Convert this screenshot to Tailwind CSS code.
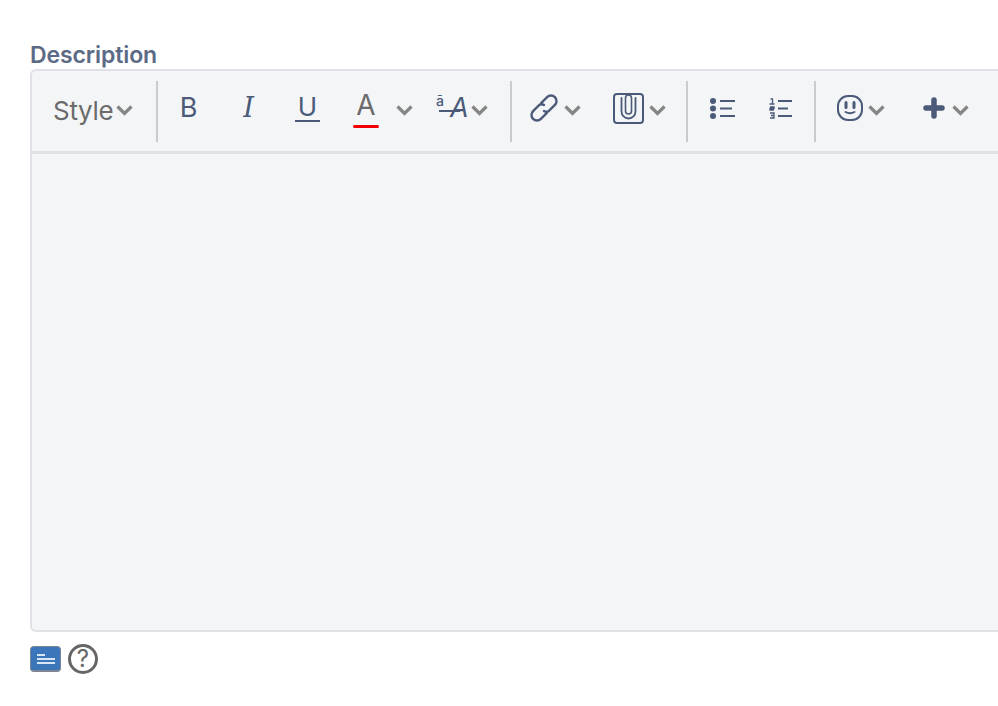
<!doctype html>
<html lang="en">
<head>
<meta charset="utf-8">
<title>Description</title>
<script src="https://cdn.jsdelivr.net/npm/@tailwindcss/browser@4"></script>
</head>
<body class="bg-white font-['Inter',sans-serif] overflow-hidden">
<div class="w-[998px] h-[706px] overflow-hidden pl-[30px] pt-[41px]">
  <div class="h-[28px] text-[23px] leading-[28px] font-semibold text-[#5b6a85] tracking-[-0.1px]">Description</div>
  <div class="w-[1000px] h-[563px] flex flex-col rounded-l-[6px] border-2 border-[#dfe1e6] border-r-0 bg-[#f4f5f7]">
    <div class="h-[83px] shrink-0 flex items-center border-b-[3px] border-[#dfe1e6] pl-[21px] pb-[6px] text-[#4a5a78]">
      <div class="w-[62px] pt-[5px] text-[26px] leading-none text-[#6b6b6b] tracking-[-0.3px]">Style</div>
      <div class="w-[19px] flex justify-center pt-1"><svg class="w-[17px] h-[11px]" viewBox="0 0 17 11" fill="none" stroke="#858585" stroke-width="3.2"><path d="M1.5 1.5 8.5 8.5 15.5 1.5"/></svg></div>
      <div class="w-[22px]"></div>
      <div class="w-[2px] h-[61px] mt-[7px] bg-[#c8cbd0]"></div>
      <div class="w-[61px] pb-[2px] text-center text-[27px] leading-none">B</div>
      <div class="w-[59px] pb-[2px] text-center text-[27px] leading-none italic font-['DejaVu_Serif',serif] font-light">I</div>
      <div class="w-[59px] flex justify-center"><div class="w-[25px] border-b-2 border-[#4a5a78] text-center text-[26px] leading-[24px] pb-[1px]">U</div></div>
      <div class="w-[58px] flex justify-center"><div class="relative w-[26px] h-[32px] text-center text-[28px] leading-[26px] text-[#6b6b6b]">A<div class="absolute left-0 top-[33px] w-[26px] h-[3px] rounded-full bg-[#f00000]"></div></div></div>
      <div class="w-[19px] flex justify-center pt-1"><svg class="w-[17px] h-[11px]" viewBox="0 0 17 11" fill="none" stroke="#858585" stroke-width="3.2"><path d="M1.5 1.5 8.5 8.5 15.5 1.5"/></svg></div>
      <div class="w-[23px]"></div>
      <div class="relative w-[32px] h-[32px]">
        <span class="absolute left-[-1px] top-[2px] text-[14px] leading-none font-medium">ā</span>
        <span class="absolute left-[13px] top-[1px] text-[27px] leading-[30px] italic">A</span>
        <div class="absolute left-[2px] top-[18px] w-[21px] h-[2px] bg-[#4a5a78]"></div>
      </div>
      <div class="w-[20px] flex justify-center pt-1"><svg class="w-[17px] h-[11px]" viewBox="0 0 17 11" fill="none" stroke="#858585" stroke-width="3.2"><path d="M1.5 1.5 8.5 8.5 15.5 1.5"/></svg></div>
      <div class="w-[21px]"></div>
      <div class="w-[2px] h-[61px] mt-[7px] bg-[#c8cbd0]"></div>
      <div class="w-[17px]"></div>
      <svg class="w-[30px] h-[30px] shrink-0" viewBox="0 0 30 30" fill="none" stroke="#4a5a78" stroke-width="2.4" stroke-linecap="round"><path d="M12.100 10.100 18.100 4.100A5.500 5.500 0 0 1 25.900 11.900L19.900 17.900Q17.500 19.500 15 18"/><path d="M17.900 19.900 11.900 25.900A5.500 5.500 0 0 1 4.100 18.100L10.100 12.100Q12.500 10.500 15 12"/></svg>
      <div class="w-[5px]"></div>
      <div class="w-[17px] flex justify-center pt-1"><svg class="w-[17px] h-[11px] shrink-0" viewBox="0 0 17 11" fill="none" stroke="#858585" stroke-width="3.2"><path d="M1.5 1.5 8.5 8.5 15.5 1.5"/></svg></div>
      <div class="w-[32px]"></div>
      <svg class="w-[31px] h-[31px] shrink-0" viewBox="0 0 31 31" fill="none" stroke="#4a5a78" stroke-width="2"><rect x="1" y="1" width="29" height="29" rx="3"/><path d="M8.500 5v13.500a7 7 0 0 0 14 0V5" stroke-width="1.800" stroke-linecap="round"/><path d="M12.500 5v13a3 3 0 0 0 6 0V5a3 3 0 0 0-6 0" stroke-width="1.600" stroke-linecap="round"/></svg>
      <div class="w-[5px]"></div>
      <div class="w-[17px] flex justify-center pt-1"><svg class="w-[17px] h-[11px] shrink-0" viewBox="0 0 17 11" fill="none" stroke="#858585" stroke-width="3.2"><path d="M1.5 1.5 8.5 8.5 15.5 1.5"/></svg></div>
      <div class="w-[20px]"></div>
      <div class="w-[2px] h-[61px] mt-[7px] bg-[#c8cbd0]"></div>
      <div class="w-[22px]"></div>
      <svg class="w-[26px] h-[21px] shrink-0" viewBox="0 0 26 21" fill="#4a5a78"><circle cx="3" cy="3" r="3"/><circle cx="3" cy="10.500" r="3"/><circle cx="3" cy="18" r="3"/><rect x="10" y="2" width="15" height="2"/><rect x="10" y="9.500" width="12" height="2"/><rect x="10" y="17" width="15" height="2"/></svg>
      <div class="w-[33px]"></div>
      <svg class="w-[24px] h-[21px] shrink-0" viewBox="0 0 24 21" fill="none" stroke="#4a5a78"><path d="M1.500 1h2v5M.5 6h5M1 9h4v1.500H1V12h4M1 15h4v2.500H2M5 17.500V20H1" stroke-width="1.300"/><path d="M9 3h14M9 10.500h10M9 18h14" stroke-width="2"/></svg>
      <div class="w-[21px]"></div>
      <div class="w-[2px] h-[61px] mt-[7px] bg-[#c8cbd0]"></div>
      <div class="w-[21px]"></div>
      <svg class="w-[26px] h-[26px] shrink-0" viewBox="0 0 26 26" fill="none" stroke="#4a5a78" stroke-width="2"><rect x="1" y="1" width="24" height="24" rx="10"/><path d="M9 7.500v5M17 7.500v5" stroke-width="3" stroke-linecap="round"/><path d="M8.500 17q4.500 2.500 9 0" stroke-linecap="round"/></svg>
      <div class="w-[5px]"></div>
      <div class="w-[17px] flex justify-center pt-1"><svg class="w-[17px] h-[11px] shrink-0" viewBox="0 0 17 11" fill="none" stroke="#858585" stroke-width="3.2"><path d="M1.5 1.5 8.5 8.5 15.5 1.5"/></svg></div>
      <div class="w-[38px]"></div>
      <svg class="w-[22px] h-[22px] shrink-0" viewBox="0 0 22 22" fill="none" stroke="#4a5a78" stroke-width="5.500" stroke-linecap="round"><path d="M11 3v16M3 11h16"/></svg>
      <div class="w-[7px]"></div>
      <div class="w-[17px] flex justify-center pt-1"><svg class="w-[17px] h-[11px] shrink-0" viewBox="0 0 17 11" fill="none" stroke="#858585" stroke-width="3.2"><path d="M1.5 1.5 8.5 8.5 15.5 1.5"/></svg></div>
    </div>
    <div class="flex-1"></div>
  </div>
  <div class="mt-[12px] flex items-center gap-[7px]">
    <div class="w-[31px] h-[26px] rounded-[4px] bg-[#3a76b9] border border-[#7d8794] border-b-2 flex items-center justify-center">
      <svg class="w-[18px] h-[10px]" viewBox="0 0 18 10" fill="#d9e6f5"><rect x="0" y="0" width="8" height="2"/><rect x="0" y="4" width="18" height="2"/><rect x="0" y="8" width="18" height="2"/></svg>
    </div>
    <div class="w-[30px] h-[30px] rounded-full border-[3px] border-[#666] text-[#666] flex items-center justify-center text-[24px] font-normal leading-none">?</div>
  </div>
</div>
</body>
</html>
